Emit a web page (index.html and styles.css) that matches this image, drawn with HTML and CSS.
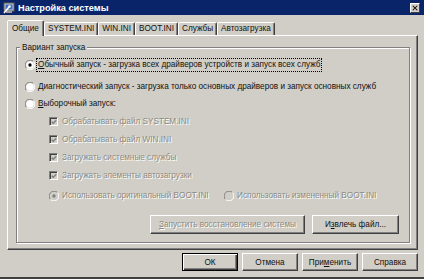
FILE: index.html
```html
<!DOCTYPE html>
<html lang="ru">
<head>
<meta charset="utf-8">
<title>Настройка системы</title>
<link rel="stylesheet" href="styles.css">
</head>
<body>
<div class="window">
  <div class="titlebar">
    <svg class="app-icon" viewBox="0 0 12 12" width="12" height="12">
      <rect x="1" y="1" width="10" height="8" fill="#c8c8c8" stroke="#5a5a5a" stroke-width="1"/>
      <rect x="2.5" y="2.5" width="7" height="5" fill="#3a6cc8"/>
      <rect x="3" y="9" width="6" height="2" fill="#9a9a9a"/>
      <path d="M1 11 L6 5" stroke="#ffffff" stroke-width="1.5"/>
      <circle cx="6.5" cy="4.5" r="1.3" fill="#ffffff"/>
    </svg>
    <span class="title">Настройка системы</span>
    <div class="close">
      <svg viewBox="0 0 8 7" width="8" height="7"><path d="M1 0.5 L7 6.5 M7 0.5 L1 6.5" stroke="#000" stroke-width="1.4"/></svg>
    </div>
  </div>

  <div class="tabs">
    <div class="tab active">Общие</div>
    <div class="tab">SYSTEM.INI</div>
    <div class="tab">WIN.INI</div>
    <div class="tab">BOOT.INI</div>
    <div class="tab">Службы</div>
    <div class="tab">Автозагрузка</div>
  </div>

  <div class="panel">
    <div class="group">
      <span class="group-label">Вариант запуска</span>

      <div class="row r1">
        <svg class="radio" viewBox="0 0 12 12"><path d="M1.76 10.24 A6 6 0 0 1 10.24 1.76" class="rd-out-dark"/><path d="M10.24 1.76 A6 6 0 0 1 1.76 10.24" class="rd-out-light"/><circle cx="6" cy="6" r="4.5" fill="#fff"/><circle cx="6" cy="6" r="2" fill="#000"/></svg>
        <span class="label focus"><u>О</u>бычный запуск - загрузка всех драйверов устройств и запуск всех служб</span>
      </div>
      <div class="row r2">
        <svg class="radio" viewBox="0 0 12 12"><path d="M1.76 10.24 A6 6 0 0 1 10.24 1.76" class="rd-out-dark"/><path d="M10.24 1.76 A6 6 0 0 1 1.76 10.24" class="rd-out-light"/><circle cx="6" cy="6" r="4.5" fill="#fff"/></svg>
        <span class="label"><u>Д</u>иагностический запуск - загрузка только основных драйверов и запуск основных служб</span>
      </div>
      <div class="row r3">
        <svg class="radio" viewBox="0 0 12 12"><path d="M1.76 10.24 A6 6 0 0 1 10.24 1.76" class="rd-out-dark"/><path d="M10.24 1.76 A6 6 0 0 1 1.76 10.24" class="rd-out-light"/><circle cx="6" cy="6" r="4.5" fill="#fff"/></svg>
        <span class="label"><u>В</u>ыборочный запуск:</span>
      </div>

      <div class="row check first">
        <span class="cbox"><svg viewBox="0 0 7 7"><path d="M0.8 3.2 L2.6 5 L6.2 1.4" /></svg></span>
        <span class="label disabled">Обрабатывать файл SYSTEM.INI</span>
      </div>
      <div class="row check">
        <span class="cbox"><svg viewBox="0 0 7 7"><path d="M0.8 3.2 L2.6 5 L6.2 1.4" /></svg></span>
        <span class="label disabled">Обрабатывать файл WIN.INI</span>
      </div>
      <div class="row check">
        <span class="cbox"><svg viewBox="0 0 7 7"><path d="M0.8 3.2 L2.6 5 L6.2 1.4" /></svg></span>
        <span class="label disabled">Загружать системные службы</span>
      </div>
      <div class="row check">
        <span class="cbox"><svg viewBox="0 0 7 7"><path d="M0.8 3.2 L2.6 5 L6.2 1.4" /></svg></span>
        <span class="label disabled">Загружать элементы автозагрузки</span>
      </div>

      <div class="row boot">
        <div class="boot-item first-col">
          <svg class="radio" viewBox="0 0 12 12"><path d="M1.76 10.24 A6 6 0 0 1 10.24 1.76" class="rd-out-dark"/><path d="M10.24 1.76 A6 6 0 0 1 1.76 10.24" class="rd-out-light"/><circle cx="6" cy="6" r="4.5" fill="#d0cec6"/><circle cx="6" cy="6" r="2" fill="#808080"/></svg>
          <span class="label disabled">Использовать оригинальный BOOT.INI</span>
        </div>
        <div class="boot-item">
          <svg class="radio" viewBox="0 0 12 12"><path d="M1.76 10.24 A6 6 0 0 1 10.24 1.76" class="rd-out-dark"/><path d="M10.24 1.76 A6 6 0 0 1 1.76 10.24" class="rd-out-light"/><circle cx="6" cy="6" r="4.5" fill="#d0cec6"/></svg>
          <span class="label disabled">Использовать измененный BOOT.INI</span>
        </div>
      </div>

      <div class="group-buttons">
        <div class="btn restore disabled-btn"><span class="disabled"><u>З</u>апустить восстановление системы</span></div>
        <div class="btn extract">И<u>з</u>влечь файл...</div>
      </div>
    </div>
  </div>

  <div class="footer">
    <div class="btn fbtn default">ОК</div>
    <div class="btn fbtn">Отмена</div>
    <div class="btn fbtn">При<u>м</u>енить</div>
    <div class="btn fbtn">Справка</div>
  </div>
</div>
</body>
</html>
```

FILE: styles.css
```css
* { box-sizing: border-box; margin: 0; padding: 0; }

html, body {
  width: 424px;
  height: 279px;
  overflow: hidden;
  background: #d0cec6;
}

body {
  font-family: "Liberation Sans", Arial, sans-serif;
  font-size: 8.2px;
  color: #111;
}

.window {
  width: 424px;
  height: 279px;
  display: flex;
  flex-direction: column;
  border-bottom: 2px solid #404040;
  background: #d0cec6;
}

/* title bar */
.titlebar {
  height: 15px;
  flex: none;
  background: #0a246a;
  display: flex;
  align-items: center;
  padding-left: 3px;
  padding-right: 4px;
}

.app-icon {
  width: 12px;
  height: 12px;
  flex: none;
}

.title {
  margin-left: 3px;
  color: #fff;
  font-weight: bold;
  font-size: 9.2px;
  flex: 1;
  white-space: nowrap;
}

.close {
  width: 10px;
  height: 10px;
  background: #d0cec6;
  border: 1px solid;
  border-color: #fff #404040 #404040 #fff;
  display: flex;
  align-items: center;
  justify-content: center;
}

.close svg { width: 6px; height: 6px; }

/* tabs */
.tabs {
  height: 15px;
  margin-top: 5px;
  padding-left: 7px;
  display: flex;
  align-items: flex-end;
  flex: none;
}

.tab {
  height: 13px;
  padding: 0 3px 0 3px;
  line-height: 11px;
  border: 1px solid;
  border-bottom: none;
  border-color: #fff #404040 transparent #fff;
  border-radius: 2px 2px 0 0;
  box-shadow: inset -1px 0 0 #808080;
  white-space: nowrap;
  background: #d0cec6;
}

.tab.active {
  height: 16px;
  margin-bottom: -1px;
  padding: 0 4px 0 4px;
  line-height: 15px;
  position: relative;
  z-index: 1;
}

/* panel */
.panel {
  height: 215px;
  width: 411px;
  margin-left: 7px;
  flex: none;
  border: 1px solid;
  border-color: #fff #404040 #404040 #fff;
  box-shadow: inset -1px -1px 0 #808080;
  padding: 11px 7px 6px 8px;
  display: flex;
  flex-direction: column;
}

.group {
  flex: 1;
  position: relative;
  border: 1px solid #808080;
  box-shadow: 1px 1px 0 #fff, inset 1px 1px 0 #fff;
  padding: 10px 9px 0 8px;
}

.group-label {
  position: absolute;
  top: -6px;
  left: 3px;
  padding: 0 2px;
  line-height: 11px;
  background: #d0cec6;
}

.row {
  height: 13px;
  display: flex;
  align-items: center;
  white-space: nowrap;
}

.r2 { margin-top: 9px; }
.r3 { margin-top: 4px; }
.check { margin-top: 5px; margin-left: 24px; }
.boot { margin-top: 7px; margin-left: 24px; }

.radio {
  width: 10px;
  height: 10px;
  flex: none;
  margin-right: 3px;
}

.rd-out-dark { fill: none; stroke: #808080; stroke-width: 1.2; }
.rd-out-light { fill: none; stroke: #fff; stroke-width: 1.2; }

.label { line-height: 12px; }

.focus {
  outline: 1px dotted #000;
  outline-offset: 0;
  padding: 0 1px;
  margin-left: -1px;
}

.disabled {
  color: #8c8a83;
  text-shadow: 1px 1px 0 #fff;
}

.cbox {
  width: 9px;
  height: 9px;
  flex: none;
  margin-right: 4px;
  border: 1px solid;
  border-color: #808080 #fff #fff #808080;
  box-shadow: inset 1px 1px 0 #404040;
  background: #d0cec6;
  display: flex;
  align-items: center;
  justify-content: center;
}

.cbox svg { width: 6px; height: 6px; }
.cbox path { fill: none; stroke: #808080; stroke-width: 1.6; }

.boot-item {
  display: flex;
  align-items: center;
}

.first-col { width: 175px; }

.group-buttons {
  margin-top: 13px;
  display: flex;
  justify-content: flex-end;
  gap: 7px;
  padding-right: 1px;
}

.btn {
  height: 19px;
  border: 1px solid;
  border-color: #fff #404040 #404040 #fff;
  box-shadow: inset -1px -1px 0 #808080;
  display: flex;
  align-items: center;
  justify-content: center;
  white-space: nowrap;
  background: #d0cec6;
}

.restore { width: 155px; }
.extract { width: 87px; }

.footer {
  margin-top: 3px;
  height: 18px;
  flex: none;
  display: flex;
  justify-content: flex-end;
  gap: 4px;
  padding-right: 6px;
}

.fbtn {
  width: 56px;
  height: 18px;
}

.default {
  border: 1px solid #000;
  box-shadow: inset 1px 1px 0 #fff, inset -1px -1px 0 #404040, inset -2px -2px 0 #808080;
}
```
